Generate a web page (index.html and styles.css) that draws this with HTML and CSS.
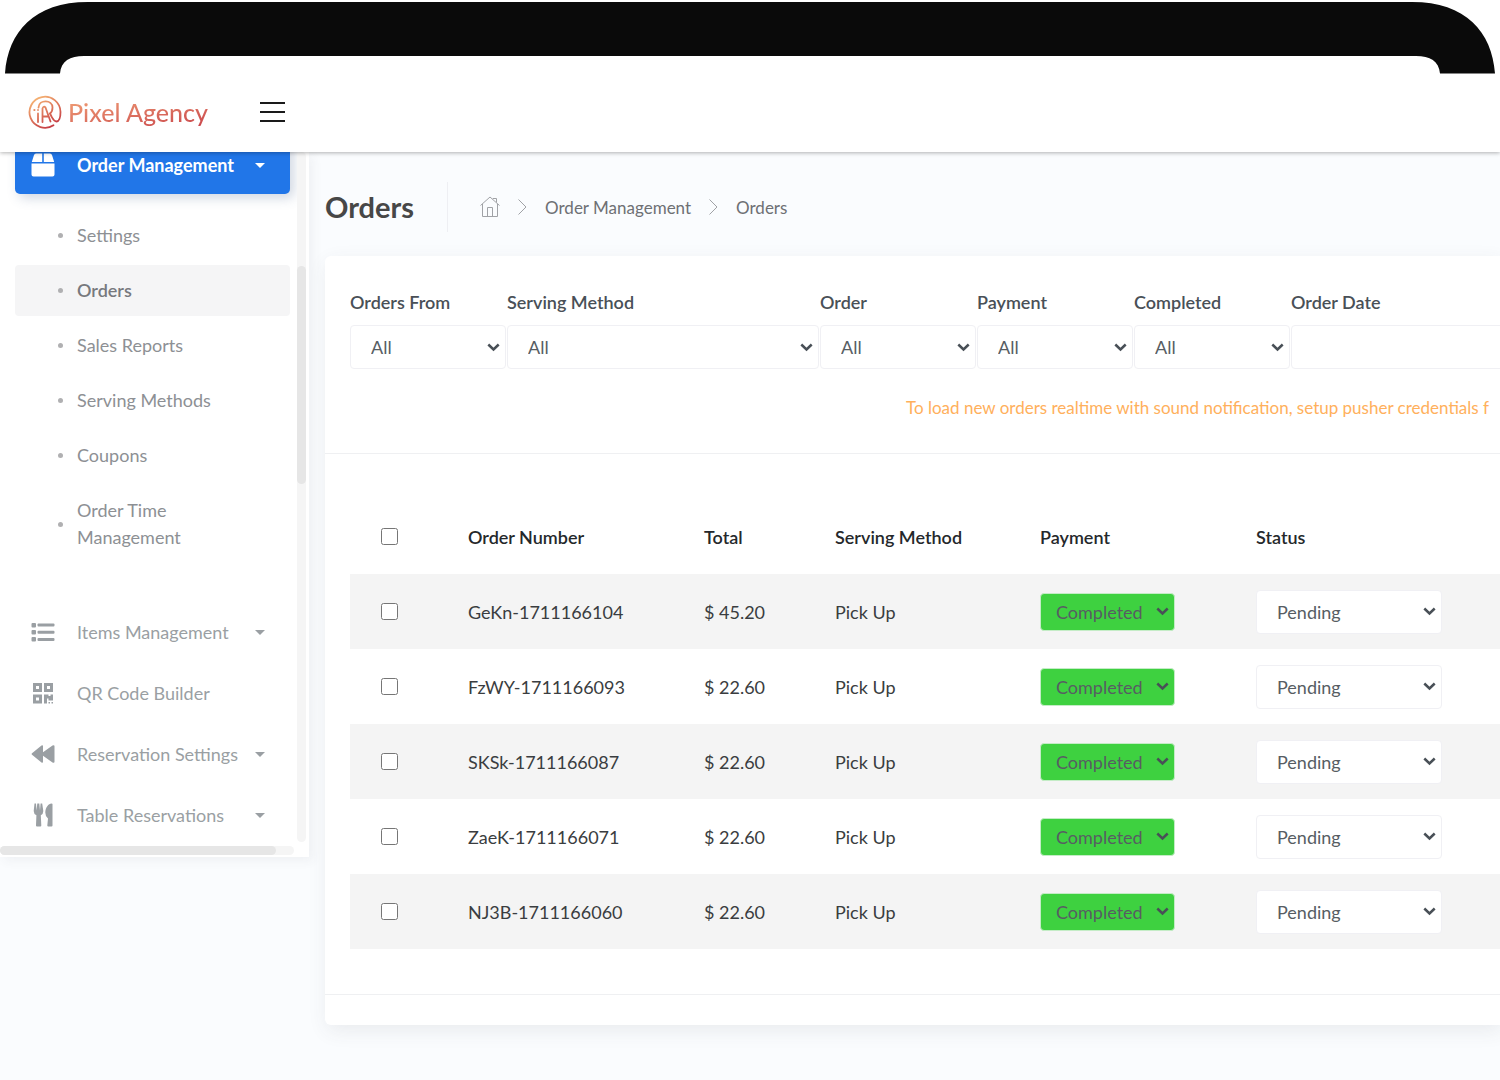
FILE: index.html
```html
<!DOCTYPE html>
<html lang="en">
<head>
    <meta charset="UTF-8">
    <meta name="viewport" content="width=device-width, initial-scale=1.0">
    <title>Orders</title>
    <link rel="stylesheet" href="styles.css">
</head>
<body>
    <!-- Tablet frame -->
    <div class="bezel">
        <svg class="corner" width="110" height="74" viewBox="0 0 110 74"><path d="M5 73.500C8 32 34 2 88 2H110V56H84C70 56 61 61 60 73.500Z" fill="#0a0a0a"/></svg>
        <div class="bezel-bar"></div>
        <svg class="corner" width="110" height="74" viewBox="0 0 110 74"><path d="M105 73.500C102 32 76 2 22 2H0V56H26C40 56 49 61 50 73.500Z" fill="#0a0a0a"/></svg>
    </div>

    <header class="topbar">
        <a class="brand" href="#">
            <svg width="34" height="34" viewBox="0 0 34 34" fill="none" stroke="url(#brandGradient)" stroke-width="1.800" stroke-linecap="round" stroke-linejoin="round">
                <defs>
                    <linearGradient id="brandGradient" x1="6" y1="0" x2="26" y2="34" gradientUnits="userSpaceOnUse">
                        <stop offset="0" stop-color="#fbc078"/>
                        <stop offset="1" stop-color="#c0303f"/>
                    </linearGradient>
                </defs>
                <path d="M25.500 30.200A15.500 15.500 0 1 1 32.500 17C32.500 23 31 26.500 28.500 26.500C26 26.500 25 24 23.500 21.500L22 18.500"/>
                <path d="M10.500 12.500C11 4 24.500 4.500 24.500 12.500C24.500 15.500 23.500 17.500 22 18.500"/>
                <path d="M14.500 27V13.500Q15.500 10.500 17.500 12.500L22.500 26.500M14.500 21.500H20.500M10 18.500V27M10 14.900V15M6.200 15H6.600"/>
            </svg>
            <span class="brand-name">Pixel Agency</span>
        </a>
        <button class="menu-toggle" type="button" aria-label="Toggle menu">
            <span></span><span></span><span></span>
        </button>
    </header>

    <div class="layout">
        <aside class="sidebar">
            <nav class="menu">
                <a class="menu-item active" href="#">
                    <svg class="menu-icon" viewBox="0 0 24 24" fill="currentColor"><path d="M5 0.500H11.200V9H0.800L3 2Q3.500 0.500 5 0.500ZM12.800 0.500H19Q20.500 0.500 21 2L23.200 9H12.800ZM0.500 10.500H23.500V21.500Q23.500 23.500 21.500 23.500H2.500Q0.500 23.500 0.500 21.500Z"/></svg>
                    <span class="menu-label">Order Management</span>
                    <i class="caret"></i>
                </a>
                <ul class="submenu">
                    <li><a href="#">Settings</a></li>
                    <li><a class="current" href="#">Orders</a></li>
                    <li><a href="#">Sales Reports</a></li>
                    <li><a href="#">Serving Methods</a></li>
                    <li><a href="#">Coupons</a></li>
                    <li><a href="#">Order Time Management</a></li>
                </ul>
                <a class="menu-item" href="#">
                    <svg class="menu-icon" viewBox="0 0 24 24" fill="currentColor"><rect x="0.500" y="3" width="4.500" height="4.500" rx="1"/><rect x="0.500" y="10" width="4.500" height="4.500" rx="1"/><rect x="0.500" y="17" width="4.500" height="4.500" rx="1"/><rect x="6.500" y="3.500" width="17" height="3" rx="1"/><rect x="6.500" y="10.700" width="17" height="3" rx="1"/><rect x="6.500" y="18" width="17" height="3" rx="1"/></svg>
                    <span class="menu-label">Items Management</span>
                    <i class="caret"></i>
                </a>
                <a class="menu-item" href="#">
                    <svg class="menu-icon" viewBox="0 0 24 24" fill="currentColor"><path fill-rule="evenodd" d="M2 2H11V11H2ZM5 5V8H8V5ZM13 2H22V11H13ZM16 5V8H19V5ZM2 13.500H11V22.500H2ZM5 16.500V19.500H8V16.500ZM13 13.500H17.500V15H19.500V13.500H22V19.500H17.500V17.500H16V22.500H13ZM17.500 21H19V22.500H17.500ZM20.500 21H22V22.500H20.500Z"/></svg>
                    <span class="menu-label">QR Code Builder</span>
                </a>
                <a class="menu-item" href="#">
                    <svg class="menu-icon" viewBox="0 0 24 24" fill="currentColor"><path d="M1 11.200L10.500 3.500Q12 2.700 12 4.300V10.200L21.500 3.500Q23.500 2.500 23.500 4.300V19.700Q23.500 21.500 21.500 20.500L12 13.800V19.700Q12 21.300 10.500 20.500L1 12.800Q0 12 1 11.200Z"/></svg>
                    <span class="menu-label">Reservation Settings</span>
                    <i class="caret"></i>
                </a>
                <a class="menu-item" href="#">
                    <svg class="menu-icon" viewBox="0 0 24 24" fill="currentColor"><path d="M3.500 0.500H5L5.500 7.500L6.300 0.500H8.300L9 7.500L9.600 0.500H11.200L12.300 8Q12.300 11 9.800 12.200L10.300 22.500Q10.300 23.500 9.300 23.500H6Q5 23.500 5 22.500L5.400 12.200Q2.700 11 2.700 8ZM21.500 1V22.500Q21.500 23.500 20.500 23.500H17.300Q16.300 23.500 16.300 22.500L17 15.500Q14.300 13.500 14.300 9.500C14.300 4.500 17.500 0.500 20.500 0.500Q21.500 0.500 21.500 1Z"/></svg>
                    <span class="menu-label">Table Reservations</span>
                    <i class="caret"></i>
                </a>
            </nav>
            <div class="rail rail-y"><div class="thumb"></div></div>
            <div class="rail rail-x"><div class="thumb"></div></div>
        </aside>

        <main class="content">
            <div class="page-title">
                <h1>Orders</h1>
                <nav class="breadcrumb">
                    <a href="#" aria-label="Home">
                        <svg width="20" height="22" viewBox="0 0 20 22" fill="none" stroke="currentColor"><path d="M0.500 9.500L10 1L19.500 9.500M2.500 8V20.500H17.500V8M7.500 20.500V11.500H12.500V20.500M13 3V2.500H16.500V6.500"/></svg>
                    </a>
                    <svg class="sep" width="9" height="16" viewBox="0 0 9 16" fill="none" stroke="currentColor"><path d="M0.500 0.500L8 8L0.500 15.500"/></svg>
                    <a href="#">Order Management</a>
                    <svg class="sep" width="9" height="16" viewBox="0 0 9 16" fill="none" stroke="currentColor"><path d="M0.500 0.500L8 8L0.500 15.500"/></svg>
                    <a href="#">Orders</a>
                </nav>
            </div>

            <section class="card">
                <div class="card-header">
                    <form class="filters">
                        <div class="field">
                            <label for="ordersFrom">Orders From</label>
                            <select id="ordersFrom" class="select"><option>All</option></select>
                        </div>
                        <div class="field wide">
                            <label for="servingMethod">Serving Method</label>
                            <select id="servingMethod" class="select"><option>All</option></select>
                        </div>
                        <div class="field">
                            <label for="order">Order</label>
                            <select id="order" class="select"><option>All</option></select>
                        </div>
                        <div class="field">
                            <label for="payment">Payment</label>
                            <select id="payment" class="select"><option>All</option></select>
                        </div>
                        <div class="field">
                            <label for="completed">Completed</label>
                            <select id="completed" class="select"><option>All</option></select>
                        </div>
                        <div class="field wide">
                            <label for="orderDate">Order Date</label>
                            <input id="orderDate" class="select date" type="text">
                        </div>
                    </form>
                    <p class="notice">To load new orders realtime with sound notification, setup pusher credentials f</p>
                </div>

                <div class="card-body">
                    <table class="orders">
                        <colgroup>
                            <col class="col-check"><col class="col-number"><col class="col-total"><col class="col-method"><col class="col-payment"><col>
                        </colgroup>
                        <thead>
                            <tr>
                                <th class="check"><input type="checkbox" aria-label="Select all"></th>
                                <th>Order Number</th>
                                <th>Total</th>
                                <th>Serving Method</th>
                                <th>Payment</th>
                                <th>Status</th>
                            </tr>
                        </thead>
                        <tbody>
                            <tr>
                                <td class="check"><input type="checkbox" aria-label="Select order"></td>
                                <td>GeKn-1711166104</td>
                                <td>$ 45.20</td>
                                <td>Pick Up</td>
                                <td><select class="select paid" aria-label="Payment"><option>Completed</option></select></td>
                                <td><select class="select status" aria-label="Status"><option>Pending</option></select></td>
                            </tr>
                            <tr>
                                <td class="check"><input type="checkbox" aria-label="Select order"></td>
                                <td>FzWY-1711166093</td>
                                <td>$ 22.60</td>
                                <td>Pick Up</td>
                                <td><select class="select paid" aria-label="Payment"><option>Completed</option></select></td>
                                <td><select class="select status" aria-label="Status"><option>Pending</option></select></td>
                            </tr>
                            <tr>
                                <td class="check"><input type="checkbox" aria-label="Select order"></td>
                                <td>SKSk-1711166087</td>
                                <td>$ 22.60</td>
                                <td>Pick Up</td>
                                <td><select class="select paid" aria-label="Payment"><option>Completed</option></select></td>
                                <td><select class="select status" aria-label="Status"><option>Pending</option></select></td>
                            </tr>
                            <tr>
                                <td class="check"><input type="checkbox" aria-label="Select order"></td>
                                <td>ZaeK-1711166071</td>
                                <td>$ 22.60</td>
                                <td>Pick Up</td>
                                <td><select class="select paid" aria-label="Payment"><option>Completed</option></select></td>
                                <td><select class="select status" aria-label="Status"><option>Pending</option></select></td>
                            </tr>
                            <tr>
                                <td class="check"><input type="checkbox" aria-label="Select order"></td>
                                <td>NJ3B-1711166060</td>
                                <td>$ 22.60</td>
                                <td>Pick Up</td>
                                <td><select class="select paid" aria-label="Payment"><option>Completed</option></select></td>
                                <td><select class="select status" aria-label="Status"><option>Pending</option></select></td>
                            </tr>
                        </tbody>
                    </table>
                </div>
                <div class="card-footer"></div>
            </section>
        </main>
    </div>
</body>
</html>
```

FILE: styles.css
```css
* {
    box-sizing: border-box;
}
body {
    margin: 0;
    min-height: 100vh;
    background: #fafcfe;
    font-family: Lato, sans-serif;
    font-size: 18px;
    color: #575962;
}
a {
    color: inherit;
    text-decoration: none;
}
svg {
    display: block;
}

/* Tablet frame */
.bezel {
    position: relative;
    z-index: 3;
    display: flex;
    background: #fff;
}
.bezel-bar {
    flex: 1;
    border-top: 2px solid #fff;
    border-bottom: 18px solid #fff;
    background: #0a0a0a;
}

/* Top bar */
.topbar {
    position: relative;
    z-index: 2;
    display: flex;
    align-items: center;
    gap: 52px;
    height: 78px;
    padding: 0 28px 2px;
    background: #fff;
    box-shadow: 0 1px 4px rgba(0,0,0,0.3);
}
.brand {
    display: flex;
    align-items: center;
    gap: 6px;
}
.brand-name {
    font-size: 25px;
    font-weight: 500;
    line-height: 32px;
    background: linear-gradient(170deg, #f3a578, #c8434a);
    background-clip: text;
    -webkit-background-clip: text;
    color: transparent;
}
.menu-toggle {
    display: flex;
    flex-direction: column;
    gap: 7px;
    padding: 0;
    border: none;
    background: none;
}
.menu-toggle span {
    width: 25px;
    height: 2px;
    background: #1a1a1a;
}

.layout {
    display: flex;
    align-items: flex-start;
}

/* Sidebar */
.sidebar {
    position: relative;
    flex: 0 0 309px;
    padding: 0 19px 10px 15px;
    background: #fff;
    box-shadow: 4px 4px 10px rgba(69,65,78,0.06);
}
.menu {
    margin-top: -16px;
}
.menu-item {
    display: flex;
    align-items: center;
    height: 58px;
    margin-bottom: 3px;
    padding: 0 25px 0 16px;
    border-radius: 5px;
    color: #9a9fa3;
}
.menu-item.active {
    margin-bottom: 16px;
    background: #2176e8;
    color: #fff;
    font-weight: 700;
    box-shadow: 4px 4px 12px rgba(69,95,140,0.25);
}
.menu-icon {
    width: 24px;
    height: 24px;
    margin-right: 22px;
}
.menu-label {
    flex: 1;
    white-space: nowrap;
}
.caret {
    border: 5px solid transparent;
    border-top-color: currentColor;
    border-bottom: none;
}
.submenu {
    margin: 0 0 40px;
    padding: 0;
    list-style: none;
}
.submenu a {
    display: flex;
    align-items: center;
    margin-bottom: 4px;
    padding: 12px 60px 12px 43px;
    border-radius: 4px;
    line-height: 27px;
    color: #8d9094;
}
.submenu a::before {
    content: "";
    flex: 0 0 5px;
    height: 5px;
    margin-right: 14px;
    border-radius: 50%;
    background: #b0b0b2;
}
.submenu .current {
    background: #f5f5f6;
    color: #77797e;
    font-weight: 600;
}
.rail {
    position: absolute;
    border-radius: 5px;
    background: #f5f5f5;
}
.rail .thumb {
    border-radius: 5px;
    background: #e6e6e6;
}
.rail-y {
    top: 0;
    right: 3px;
    bottom: 15px;
    width: 9px;
    padding-top: 114px;
}
.rail-y .thumb {
    height: 218px;
}
.rail-x {
    left: 0;
    right: 15px;
    bottom: 2px;
    height: 9px;
}
.rail-x .thumb {
    width: 276px;
    height: 9px;
}

/* Page content */
.content {
    flex: 1;
    min-width: 0;
    padding: 30px 0 54px 16px;
    overflow: hidden;
}
.page-title {
    display: flex;
    align-items: center;
    height: 50px;
    margin-bottom: 24px;
}
h1 {
    display: flex;
    align-items: center;
    height: 50px;
    margin: 0;
    padding: 0 33px 2px 0;
    border-right: 1px solid #eeeff3;
    font-size: 29px;
    color: #474747;
}
.breadcrumb {
    display: flex;
    align-items: center;
    gap: 18px;
    padding-left: 32px;
    font-size: 17px;
    color: #6e7074;
}
.breadcrumb svg {
    color: #a0a2a6;
}

.card {
    border-radius: 6px 0 0 6px;
    background: #fff;
    box-shadow: 2px 6px 20px rgba(69,65,78,0.09);
}
.card-header {
    padding: 32px 0 32px 25px;
    border-bottom: 1px solid #eff0f2;
    overflow: hidden;
}
.filters {
    display: flex;
    gap: 1px;
}
.field {
    flex: 0 0 156px;
}
.field.wide {
    flex-basis: 312px;
}
.field label {
    display: block;
    margin-bottom: 9px;
    line-height: 28px;
    font-weight: 600;
    color: #495057;
}
.select {
    appearance: none;
    display: block;
    width: 100%;
    height: 44px;
    padding: 0 20px;
    border: 1px solid #f0f0f4;
    border-radius: 4px;
    background: #fff url("data:image/svg+xml,%3Csvg xmlns='http://www.w3.org/2000/svg' width='13' height='9' viewBox='0 0 13 9' fill='none' stroke='%23495057' stroke-width='2.500'%3E%3Cpath d='M1.300 1.500L6.500 6.500L11.700 1.500'/%3E%3C/svg%3E") no-repeat right 5px center;
    font-family: inherit;
    font-size: 18px;
    color: #575d63;
}
.date {
    background-image: none;
}
.notice {
    margin: 25px 0 0 556px;
    font-size: 17px;
    line-height: 27px;
    white-space: nowrap;
    color: #ffb05c;
}

.card-body {
    padding: 45px 0 45px 25px;
}
.orders {
    width: 100%;
    border-collapse: collapse;
    table-layout: fixed;
}
.col-check {
    width: 98px;
}
.col-number {
    width: 236px;
}
.col-total {
    width: 131px;
}
.col-method {
    width: 205px;
}
.col-payment {
    width: 216px;
}
.orders th, .orders td {
    height: 75px;
    padding: 0 20px;
    text-align: left;
    color: #3a3d40;
}
.orders th {
    font-weight: 600;
    color: #25282b;
}
.orders tbody tr:nth-child(odd) {
    background: #f4f4f4;
}
.orders .check {
    padding-left: 31px;
}
.orders input {
    display: block;
    width: 17px;
    height: 17px;
    margin: 0;
}
.orders .paid {
    width: 135px;
    height: 38px;
    padding: 0 15px;
    border-color: #c4ecc6;
    background-color: #3ed140;
}
.orders .status {
    width: 186px;
}
.card-footer {
    height: 31px;
    border-top: 1px solid #eff0f2;
}
```
